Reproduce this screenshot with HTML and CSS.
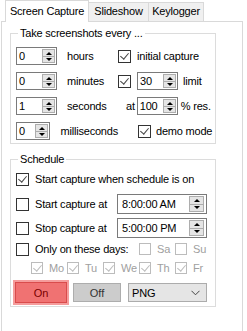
FILE: index.html
```html
<!DOCTYPE html>
<html lang="en">
<head>
    <meta charset="UTF-8" />
    <title>Screen Capture</title>
    <link rel="stylesheet" href="styles.css">
</head>
<body>

    <div class="tabs">
        <div class="tab active">Screen Capture</div>
        <div class="tab tab-slide">Slideshow</div>
        <div class="tab tab-key">Keylogger</div>
    </div>

    <div class="page">

        <fieldset class="group group-shots">
            <legend>Take screenshots every ...</legend>

            <div class="row">
                <div class="left">
                    <div class="spin"><span class="val">0</span><span class="arrows"><i class="up"></i><i class="dn"></i></span></div>
                    <span class="lbl">hours</span>
                </div>
                <span class="cb checked"></span>
                <span class="cb-text">initial capture</span>
            </div>

            <div class="row">
                <div class="left">
                    <div class="spin"><span class="val">0</span><span class="arrows"><i class="up"></i><i class="dn"></i></span></div>
                    <span class="lbl">minutes</span>
                </div>
                <span class="cb checked"></span>
                <div class="spin spin-right"><span class="val">30</span><span class="arrows"><i class="up"></i><i class="dn"></i></span></div>
                <span class="after-limit">limit</span>
            </div>

            <div class="row">
                <div class="left">
                    <div class="spin"><span class="val">1</span><span class="arrows"><i class="up"></i><i class="dn"></i></span></div>
                    <span class="lbl">seconds</span>
                </div>
                <span class="at">at</span>
                <div class="spin spin-res"><span class="val">100</span><span class="arrows"><i class="up"></i><i class="dn"></i></span></div>
                <span class="after-res">% res.</span>
            </div>

            <div class="row">
                <div class="left">
                    <div class="spin"><span class="val">0</span><span class="arrows"><i class="up"></i><i class="dn"></i></span></div>
                    <span class="lbl">milliseconds</span>
                </div>
                <span class="cb checked cb-demo"></span>
                <span class="demo-text">demo mode</span>
            </div>
        </fieldset>

        <fieldset class="group group-sched">
            <legend>Schedule</legend>

            <div class="srow r1">
                <span class="cb checked"></span>
                <span class="cb-text">Start capture when schedule is on</span>
            </div>

            <div class="srow r2">
                <div class="sleft">
                    <span class="cb"></span>
                    <span class="cb-text">Start capture at</span>
                </div>
                <div class="time"><span class="val">8:00:00 AM</span><span class="arrows"><i class="up"></i><i class="dn"></i></span></div>
            </div>

            <div class="srow r3">
                <div class="sleft">
                    <span class="cb"></span>
                    <span class="cb-text">Stop capture at</span>
                </div>
                <div class="time"><span class="val">5:00:00 PM</span><span class="arrows"><i class="up"></i><i class="dn"></i></span></div>
            </div>

            <div class="srow r4">
                <div class="sleft wide">
                    <span class="cb"></span>
                    <span class="cb-text">Only on these days:</span>
                </div>
                <div class="day"><span class="cb off"></span><span class="day-lbl">Sa</span></div>
                <div class="day"><span class="cb off"></span><span class="day-lbl">Su</span></div>
            </div>

            <div class="srow days">
                <div class="day"><span class="cb off checked"></span><span class="day-lbl">Mo</span></div>
                <div class="day"><span class="cb off checked"></span><span class="day-lbl">Tu</span></div>
                <div class="day"><span class="cb off checked"></span><span class="day-lbl">We</span></div>
                <div class="day"><span class="cb off checked"></span><span class="day-lbl">Th</span></div>
                <div class="day"><span class="cb off checked"></span><span class="day-lbl">Fr</span></div>
            </div>

            <div class="srow buttons">
                <button class="btn-on">On</button>
                <button class="btn-off">Off</button>
                <div class="combo">
                    <span>PNG</span>
                    <svg width="9" height="6" viewBox="0 0 9 6"><polyline points="0.5,0.8 4.5,4.8 8.5,0.8" fill="none" stroke="#444" stroke-width="1"/></svg>
                </div>
            </div>
        </fieldset>

    </div>

</body>
</html>
```

FILE: styles.css
```css
body {
    margin: 0;
    background: #fff;
    font-family: 'Liberation Sans', Arial, sans-serif;
    font-size: 11px;
    letter-spacing: -0.2px;
    color: #000;
    width: 247px;
    height: 331px;
    overflow: hidden;
}

/* tab strip */
.tabs {
    display: flex;
    align-items: flex-end;
    height: 21px;
    margin-left: 5px;
}

.tab {
    box-sizing: border-box;
    height: 19px;
    line-height: 17px;
    border: 1px solid #d9d9d9;
    border-bottom: none;
    background: #f0f0f0;
    text-align: center;
}

.tab.active {
    width: 84px;
    height: 22px;
    line-height: 21px;
    background: #fff;
    margin-bottom: -1px;
    position: relative;
    z-index: 1;
}

.tab-slide {
    width: 61px;
    margin-left: -1px;
}

.tab-key {
    width: 56px;
    margin-left: -1px;
}

.page {
    box-sizing: border-box;
    margin-left: 1px;
    width: 242px;
    height: 310px;
    border: 1px solid #d9d9d9;
    border-bottom: none;
    background: #fff;
}

/* group boxes */
.group {
    box-sizing: border-box;
    width: 206px;
    margin: 0 0 0 8px;
    border: 1px solid #dcdcdc;
    padding: 0 0 0 5px;
}

.group legend {
    padding: 0 2px;
    margin-left: 2px;
    line-height: 13px;
}

.group-shots {
    margin-top: 5px;
    padding-top: 7px;
    padding-bottom: 3px;
}

.group-sched {
    margin-top: 9px;
    padding-top: 4px;
    padding-bottom: 1px;
}

.row {
    display: flex;
    align-items: center;
    height: 18px;
    margin-bottom: 7px;
}

.row:last-child {
    margin-bottom: 0;
}

.left {
    width: 102px;
    display: flex;
    align-items: center;
}

.lbl {
    margin-left: 10px;
}

/* spin boxes */
.spin,
.time {
    box-sizing: border-box;
    display: flex;
    height: 18px;
    width: 41px;
    border: 1px solid #7a7a7a;
    background: #fff;
}

.val {
    flex: 1;
    padding-left: 2px;
    line-height: 16px;
}

.arrows {
    box-sizing: border-box;
    width: 13px;
    margin: 1px 1px 1px 0;
    border: 1px solid #adadad;
    background: #e5e5e5;
    display: flex;
    flex-direction: column;
}

.arrows i {
    flex: 1;
    position: relative;
}

.arrows i.dn {
    border-top: 1px solid #adadad;
}

.arrows i::after {
    content: '';
    position: absolute;
    left: 3px;
    top: 2px;
    border-left: 3px solid transparent;
    border-right: 3px solid transparent;
}

.arrows i.up::after {
    border-bottom: 3px solid #000;
}

.arrows i.dn::after {
    top: 1px;
    border-top: 3px solid #000;
}

.spin-right {
    margin-left: 6px;
}

.after-limit {
    margin-left: 5px;
}

.at {
    margin-left: 8px;
}

.spin-res {
    margin-left: 2px;
}

.after-res {
    margin-left: 3px;
}

.cb-demo {
    margin-left: 20px;
}

.demo-text {
    margin-left: 5px;
}

/* check boxes */
.cb {
    box-sizing: border-box;
    display: inline-block;
    width: 13px;
    height: 13px;
    border: 1px solid #333;
    background: #fff;
    position: relative;
    flex: none;
}

.cb.checked::after {
    content: '';
    position: absolute;
    left: 3px;
    top: 0px;
    width: 4px;
    height: 7px;
    border-right: 1px solid #444;
    border-bottom: 1px solid #444;
    transform: rotate(40deg);
}

.cb.off {
    width: 12px;
    height: 12px;
    border-color: #bcbcbc;
}

.cb.off.checked::after {
    border-color: #bcbcbc;
    left: 3px;
    top: 0px;
}

.cb-text {
    margin-left: 6px;
}

/* schedule rows */
.srow {
    display: flex;
    align-items: center;
}

.r1 {
    height: 18px;
    margin-top: 0;
}

.r2 {
    height: 20px;
    margin-top: 6px;
}

.r3 {
    height: 20px;
    margin-top: 4px;
}

.r4 {
    height: 16px;
    margin-top: 3px;
}

.sleft {
    width: 101px;
    display: flex;
    align-items: center;
}

.sleft.wide {
    width: 123px;
}

.time {
    width: 90px;
    height: 20px;
}

.time .val {
    padding-left: 4px;
    line-height: 18px;
}

.time .arrows {
    width: 15px;
    margin: 1px 2px 1px 0;
}

.time .arrows i::after {
    left: 4px;
}

.day {
    width: 36px;
    display: flex;
    align-items: center;
}

.day-lbl {
    margin-left: 6px;
    color: #a0a0a0;
}

.days {
    height: 16px;
    margin-top: 3px;
    padding-left: 15px;
}

.buttons {
    margin-top: 4px;
    height: 25px;
}

.btn-on {
    box-sizing: border-box;
    margin-left: -3px;
    width: 56px;
    height: 25px;
    background: #f07272;
    border: 2px solid #f59c9c;
    box-shadow: inset 0 0 0 1px #d94c4c;
    color: #7a0000;
    font-family: 'Liberation Sans', Arial, sans-serif;
    font-size: 11px;
    padding: 0;
}

.btn-off {
    box-sizing: border-box;
    margin-left: 4px;
    width: 48px;
    height: 19px;
    background: #cccccc;
    border: 1px solid #adadad;
    color: #333;
    font-family: 'Liberation Sans', Arial, sans-serif;
    font-size: 11px;
    padding: 0;
}

.combo {
    box-sizing: border-box;
    margin-left: 7px;
    width: 79px;
    height: 19px;
    background: #e5e5e5;
    border: 1px solid #acacac;
    display: flex;
    align-items: center;
    justify-content: space-between;
    padding: 0 6px 0 3px;
}
```
